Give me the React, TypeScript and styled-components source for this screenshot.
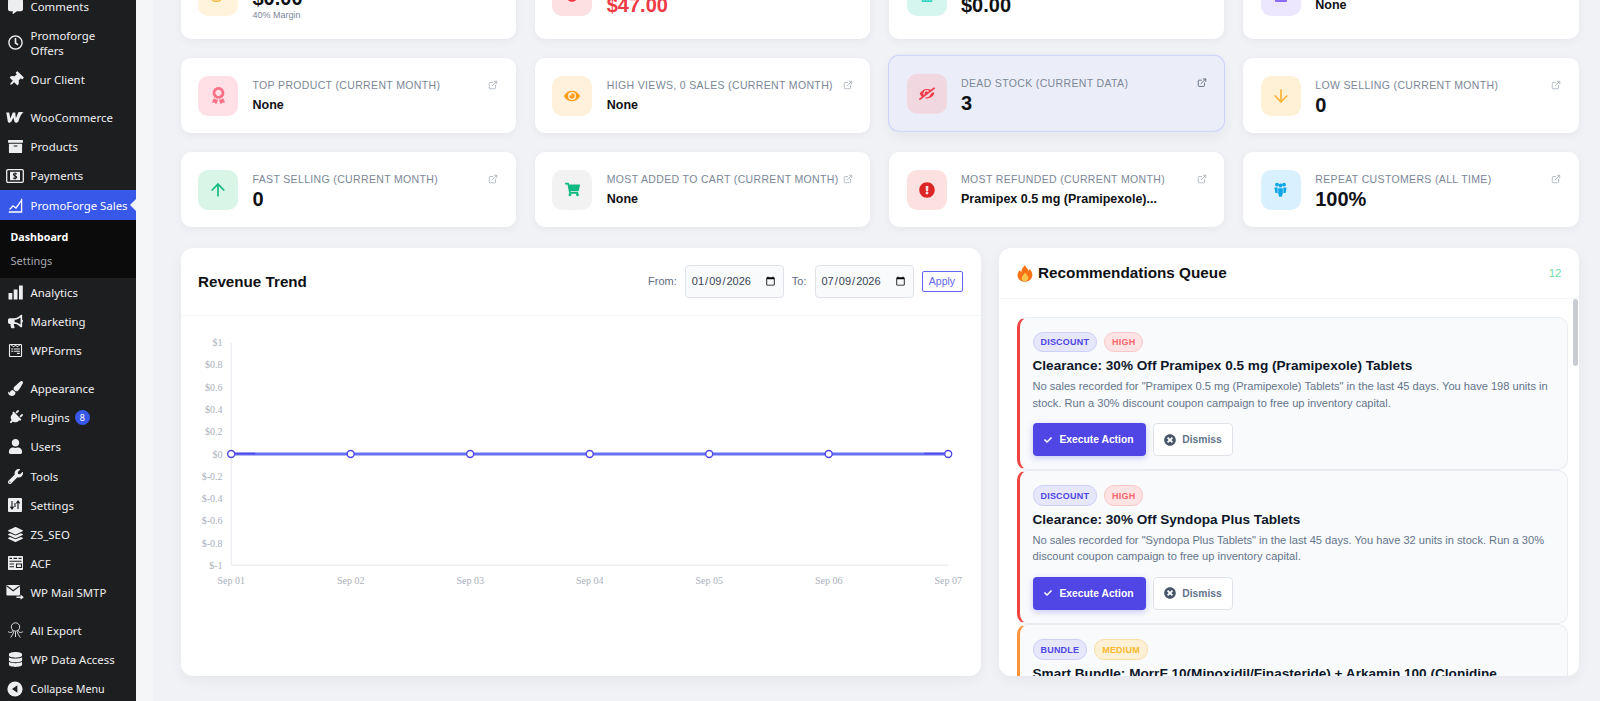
import React from "react";
import styled, { createGlobalStyle } from "styled-components";
import {
  FaArchive, FaAward, FaBox, FaBullhorn, FaCalculator, FaCheck, FaCoins,
  FaCommentAlt, FaDatabase, FaEye, FaEyeSlash, FaExclamationCircle, FaLayerGroup, FaMinusCircle,
  FaPaintBrush, FaPlug, FaRegClock, FaShoppingCart, FaThumbtack, FaTimesCircle, FaUser,
  FaWrench, FaWpforms,
} from "react-icons/fa";
import { FiExternalLink } from "react-icons/fi";
import { ArrowDown, ArrowUp } from "lucide-react";

const GlobalStyle = createGlobalStyle`
  html, body { margin: 0; padding: 0; height: 100%; overflow: hidden; background: #f0f2f6; }
  body { font-family: "Liberation Sans", Arial, sans-serif; }
  * { box-sizing: border-box; }
`;

const Page = styled.div`
  display: flex;
  height: 701px;
  overflow: hidden;
`;

/* ---------- admin sidebar ---------- */

const Sidebar = styled.nav`
  width: 136px;
  flex-shrink: 0;
  background: #1d1e20;
  color: #f0f0f1;
  font-family: "Noto Sans", sans-serif;
  font-size: 11.4px;
  margin-top: -8.5px;
  height: 720px;
`;

const MenuItem = styled.div<{ $active?: boolean; $tall?: boolean; $gap?: boolean; $small?: boolean }>`
  position: relative;
  display: flex;
  align-items: center;
  height: ${p => (p.$tall ? "44px" : p.$active ? "30px" : p.$small ? "30px" : "29.05px")};
  margin-top: ${p => (p.$gap ? "9.5px" : "0")};
  padding-left: 30.5px;
  line-height: 15px;
  white-space: nowrap;
  font-size: ${p => (p.$small ? "10.7px" : "11.4px")};
  background: ${p => (p.$active ? "#3858e9" : "transparent")};
  color: ${p => (p.$active ? "#fff" : "#f0f0f1")};
`;

const MenuIcon = styled.span`
  position: absolute;
  left: 5px;
  top: 50%;
  transform: translateY(-50%);
  width: 20px;
  height: 20px;
  display: flex;
  align-items: center;
  justify-content: center;
  color: #eceeef;
  font-size: 15px;
`;

const ActiveArrow = styled.span`
  position: absolute;
  right: 0;
  top: 50%;
  margin-top: -6px;
  border: 6px solid transparent;
  border-right-color: #f0f2f6;
  border-left-width: 0;
`;

const Submenu = styled.div`
  background: #0b0b0c;
  padding: 4.5px 0;
  height: 57.5px;
`;

const SubItem = styled.div<{ $current?: boolean }>`
  height: 24.3px;
  line-height: 24px;
  padding-left: 10.5px;
  font-size: ${p => (p.$current ? "10.7px" : "11px")};
  font-weight: ${p => (p.$current ? 700 : 400)};
  color: ${p => (p.$current ? "#fff" : "#a5a8ac")};
`;

const Badge = styled.span`
  display: inline-flex;
  align-items: center;
  justify-content: center;
  width: 15px;
  height: 15px;
  margin-left: 5px;
  border-radius: 50%;
  background: #3858e9;
  color: #fff;
  font-size: 9px;
`;

const PaymentsIcon = () => (
  <svg width="18" height="14" viewBox="0 0 18 14">
    <rect x="0.7" y="0.7" width="16.6" height="12.6" rx="1.2" fill="none" stroke="currentColor" strokeWidth="1.3" />
    <rect x="4" y="2.8" width="10" height="8.4" fill="currentColor" />
    <path d="M11 5 C10 4.2 7.4 4.3 7.4 5.6 C7.4 7.2 10.8 6.6 10.8 8.3 C10.8 9.6 8 9.6 7 8.9 M9 3.6 V10.4" fill="none" stroke="#1d1e20" strokeWidth="1.1" />
  </svg>
);

const WooIcon = () => (
  <svg width="18" height="11" viewBox="0 0 18 11">
    <path d="M0.3 0.5 H3.2 L4.3 6.4 L6.8 0.5 H9.2 L9.9 6.2 L12.2 0.5 C13.4 -0.1 16.8 -0.1 17.6 0.8 C15.6 1.2 14.2 4 12.4 9.6 C11.6 11 9.2 11 8.4 9.4 L7.4 5.6 L5.4 9.6 C4.4 11 2.4 11 1.8 9.4 Z" fill="currentColor" />
  </svg>
);

const SalesIcon = () => (
  <svg width="15" height="15" viewBox="0 0 15 15" fill="none" stroke="currentColor" strokeWidth="1.3">
    <path d="M13.6 0.8 V14 H0.8" />
    <path d="M1.6 11.5 L5 7.8 L8 10 L13.2 2.8" />
  </svg>
);

const BarsIcon = () => (
  <svg width="15" height="15" viewBox="0 0 15 15" fill="currentColor">
    <rect x="0.5" y="8" width="3.8" height="6.5" />
    <rect x="5.7" y="4.5" width="3.8" height="10" />
    <rect x="11" y="0.5" width="3.8" height="14" />
  </svg>
);

const SlidersIcon = () => (
  <svg width="14" height="14" viewBox="0 0 14 14">
    <rect width="14" height="14" rx="1" fill="currentColor" />
    <path d="M4 3 V11 M2.4 8.6 L4 11 L5.6 8.6 M10 11 V3 M8.4 5.4 L10 3 L11.6 5.4 M7 5 V9" fill="none" stroke="#1d1e20" strokeWidth="1.1" />
  </svg>
);

const TableIcon = () => (
  <svg width="15" height="14" viewBox="0 0 15 14">
    <rect width="15" height="14" rx="0.8" fill="currentColor" />
    <path d="M1.5 2.4 H4 M5.5 2.4 H9 M10.5 2.4 H13.5 M1.5 5.2 H13.5 M1.5 8 H6 M8.5 8 H13.5 V11.5 H8.5 Z M1.5 10.8 H6" fill="none" stroke="#1d1e20" strokeWidth="1.1" />
  </svg>
);

const MailIcon = () => (
  <svg width="18" height="16" viewBox="0 0 18 16">
    <rect x="0.4" y="1" width="13.6" height="10.6" rx="1" fill="currentColor" />
    <path d="M1 2 L7.2 6.8 L13.6 2" fill="none" stroke="#1d1e20" strokeWidth="1.2" />
    <path d="M10.5 12.6 H14.6 V10.6 L17.8 13.2 L14.6 15.8 V14 H10.5 Z" fill="currentColor" />
  </svg>
);

const OctopusIcon = () => (
  <svg width="17" height="17" viewBox="0 0 17 17" fill="none" stroke="currentColor" strokeWidth="0.9">
    <circle cx="8.5" cy="5" r="4.2" />
    <path d="M5.6 8.4 C5.4 11 3.2 11 1 9.6 M6.6 9.4 C6.4 12 5 13.5 3.6 15.6 M10.4 9.4 C10.6 12 12 13.5 13.4 15.6 M11.4 8.4 C11.6 11 13.8 11 16 9.6 M8.5 9.6 V15" />
  </svg>
);

const CollapseIcon = () => (
  <svg width="16" height="16" viewBox="0 0 16 16">
    <circle cx="8" cy="8" r="7.6" fill="currentColor" />
    <path d="M10.4 4.2 V11.8 L5 8 Z" fill="#1d1e20" />
  </svg>
);

const PeopleIcon = () => (
  <svg width="13" height="15" viewBox="0 0 13 15" fill="currentColor">
    <circle cx="3" cy="2.6" r="1.9" />
    <circle cx="10" cy="2.6" r="1.9" />
    <circle cx="6.5" cy="3.6" r="2" />
    <path d="M0.4 5.4 H3.6 V11 H1.4 Z M9.4 5.4 H12.6 L11.6 11 H9.4 Z" />
    <path d="M4.2 6.2 H8.8 V11.6 L7.8 14.8 H5.2 L4.2 11.6 Z" />
  </svg>
);

const menuTop: [React.ReactNode, React.ReactNode, boolean?, boolean?][] = [
  [<FaCommentAlt />, "Comments"],
  [<FaRegClock />, <>Promoforge<br />Offers</>, true],
  [<FaThumbtack style={{ transform: "rotate(45deg)" }} />, "Our Client"],
  [<WooIcon />, "WooCommerce", false, true],
  [<FaArchive />, "Products"],
  [<PaymentsIcon />, "Payments"],
];

const menuMiddle: [React.ReactNode, string, boolean?][] = [
  [<BarsIcon />, "Analytics"],
  [<FaBullhorn />, "Marketing"],
  [<FaWpforms />, "WPForms"],
];

const menuBottom: [React.ReactNode, string][] = [
  [<FaUser />, "Users"],
  [<FaWrench />, "Tools"],
  [<SlidersIcon />, "Settings"],
  [<FaLayerGroup />, "ZS_SEO"],
  [<TableIcon />, "ACF"],
  [<MailIcon />, "WP Mail SMTP"],
];

function AdminMenu() {
  return (
    <Sidebar>
      {menuTop.map(([icon, label, tall, gap], i) => (
        <MenuItem key={i} $tall={tall} $gap={gap}>
          <MenuIcon>{icon}</MenuIcon>
          <span>{label}</span>
        </MenuItem>
      ))}
      <MenuItem $active>
        <MenuIcon style={{ color: "#fff" }}><SalesIcon /></MenuIcon>
        <span>PromoForge Sales</span>
        <ActiveArrow />
      </MenuItem>
      <Submenu>
        <SubItem $current>Dashboard</SubItem>
        <SubItem>Settings</SubItem>
      </Submenu>
      {menuMiddle.map(([icon, label]) => (
        <MenuItem key={label}>
          <MenuIcon>{icon}</MenuIcon>
          <span>{label}</span>
        </MenuItem>
      ))}
      <MenuItem $gap>
        <MenuIcon><FaPaintBrush /></MenuIcon>
        <span>Appearance</span>
      </MenuItem>
      <MenuItem>
        <MenuIcon><FaPlug style={{ transform: "rotate(45deg)" }} /></MenuIcon>
        <span>Plugins</span>
        <Badge>8</Badge>
      </MenuItem>
      {menuBottom.map(([icon, label]) => (
        <MenuItem key={label}>
          <MenuIcon>{icon}</MenuIcon>
          <span>{label}</span>
        </MenuItem>
      ))}
      <MenuItem $gap>
        <MenuIcon><OctopusIcon /></MenuIcon>
        <span>All Export</span>
      </MenuItem>
      <MenuItem>
        <MenuIcon><FaDatabase /></MenuIcon>
        <span>WP Data Access</span>
      </MenuItem>
      <MenuItem $small>
        <MenuIcon><CollapseIcon /></MenuIcon>
        <span>Collapse Menu</span>
      </MenuItem>
    </Sidebar>
  );
}

/* ---------- stat cards ---------- */

const Main = styled.main`
  flex: 1;
  min-width: 0;
  padding: 0 21.5px 0 44.5px;
  background: linear-gradient(90deg, #f5f6f8 0, #f5f6f8 17px, #f0f2f6 17px);
`;

const StatsGrid = styled.section`
  display: grid;
  grid-template-columns: repeat(4, 1fr);
  gap: 19px;
  margin-top: -47px;
`;

const Card = styled.div<{ $hover?: boolean }>`
  display: flex;
  align-items: center;
  gap: 14.5px;
  padding: 17.5px;
  border-radius: 10px;
  background: ${p => (p.$hover ? "#ebeef9" : "#fff")};
  box-shadow: ${p => (p.$hover ? "0 0 0 1px #ccd2fa, 0 6px 14px rgba(15, 23, 42, 0.05)" : "0 2px 8px rgba(15, 23, 42, 0.05)")};
  transform: ${p => (p.$hover ? "translateY(-2.3px)" : "none")};
`;

const IconBox = styled.div<{ $bg: string; $fg: string }>`
  width: 40px;
  height: 40px;
  flex-shrink: 0;
  border-radius: 10px;
  display: flex;
  align-items: center;
  justify-content: center;
  background: ${p => p.$bg};
  color: ${p => p.$fg};
  font-size: 15px;
`;

const CardBody = styled.div`
  flex: 1;
  min-width: 0;
  min-height: 40px;
  padding-top: 3px;
`;

const LabelRow = styled.div`
  display: flex;
  justify-content: space-between;
  align-items: center;
  height: 13px;
  margin-bottom: 1px;
`;

const Label = styled.span`
  font-size: 10.5px;
  letter-spacing: 0.35px;
  color: #7b8798;
  text-transform: uppercase;
  white-space: nowrap;
`;

const LinkOut = styled.span<{ $strong?: boolean }>`
  display: flex;
  font-size: 10px;
  color: ${p => (p.$strong ? "#566072" : "#aab2bf")};
`;

const Value = styled.div<{ $big?: boolean; $red?: boolean; $tight?: boolean }>`
  height: ${p => (p.$tight ? "20px" : "23px")};
  line-height: ${p => (p.$tight ? "20px" : "24px")};
  font-size: ${p => (p.$big ? "20px" : "12.5px")};
  font-weight: 700;
  color: ${p => (p.$red ? "#ef3a46" : "#0f1115")};
  white-space: nowrap;
`;

const SubValue = styled.div`
  font-size: 9px;
  line-height: 14px;
  color: #7b8798;
`;

type Stat = {
  icon: React.ReactNode;
  bg: string;
  fg: string;
  label?: string;
  value: string;
  big?: boolean;
  red?: boolean;
  sub?: string;
  hover?: boolean;
};

const stats: Stat[] = [
  { icon: <FaCoins size={12} />, bg: "#fff3dc", fg: "#f6b93b", value: "$0.00", big: true, sub: "40% Margin" },
  { icon: <FaMinusCircle size={12} />, bg: "#fde0e2", fg: "#ef3a46", value: "$47.00", big: true, red: true },
  { icon: <FaCalculator size={12} />, bg: "#d5f5ef", fg: "#2dd4bf", value: "$0.00", big: true },
  { icon: <FaBox size={12} />, bg: "#ece6ff", fg: "#8b6cf6", value: "None" },
  { icon: <FaAward size={17} />, bg: "#ffe0e6", fg: "#fb7185", label: "Top Product (Current Month)", value: "None" },
  { icon: <FaEye size={16} />, bg: "#fff1dc", fg: "#ff9f1c", label: "High Views, 0 Sales (Current Month)", value: "None" },
  { icon: <FaEyeSlash size={16} style={{ transform: "scaleX(-1)" }} />, bg: "#f1d8e0", fg: "#ef3a46", label: "Dead Stock (Current Data)", value: "3", big: true, hover: true },
  { icon: <ArrowDown size={20} strokeWidth={2} />, bg: "#fff1d6", fg: "#fbb437", label: "Low Selling (Current Month)", value: "0", big: true },
  { icon: <ArrowUp size={20} strokeWidth={2} />, bg: "#d9f5e8", fg: "#10b981", label: "Fast Selling (Current Month)", value: "0", big: true },
  { icon: <FaShoppingCart size={15} />, bg: "#f2f2f2", fg: "#10b981", label: "Most Added to Cart (Current Month)", value: "None" },
  { icon: <FaExclamationCircle size={16} />, bg: "#fde0e0", fg: "#dc2626", label: "Most Refunded (Current Month)", value: "Pramipex 0.5 mg (Pramipexole)..." },
  { icon: <PeopleIcon />, bg: "#d9f0ff", fg: "#0ea5e9", label: "Repeat Customers (All Time)", value: "100%", big: true },
];

/* ---------- revenue chart ---------- */

const Columns = styled.section`
  display: grid;
  grid-template-columns: 800px 580px;
  gap: 18px;
  margin-top: 21px;
`;

const Panel = styled.div`
  position: relative;
  height: 427.5px;
  border-radius: 12px;
  background: #fff;
  overflow: hidden;
  box-shadow: 0 4px 14px rgba(15, 23, 42, 0.05);
`;

const ChartHeader = styled.header`
  display: flex;
  align-items: center;
  justify-content: space-between;
  height: 67.5px;
  padding: 0 18px 0 17.5px;
  border-bottom: 1px solid #f6f7f9;
`;

const PanelTitle = styled.h3`
  margin: 0;
  font-size: 15.2px;
  font-weight: 700;
  color: #0f1115;
`;

const DateForm = styled.form`
  display: flex;
  align-items: center;
`;

const DateLabel = styled.label`
  font-size: 11px;
  color: #5f6b7c;
  margin-right: 8px;
`;

const DateInput = styled.input`
  width: 99px;
  height: 33px;
  padding: 0 5px;
  margin-right: 8px;
  border: 1px solid #dfe3e9;
  border-radius: 4px;
  background: #f8fafc;
  color: #3a4452;
  font: 11px "Liberation Sans", Arial, sans-serif;
`;

const ApplyButton = styled.button`
  width: 41px;
  height: 21px;
  padding: 0;
  border: 1px solid #6366f1;
  border-radius: 2px;
  background: #fff;
  color: #6366f1;
  font: 10.5px "Liberation Sans", Arial, sans-serif;
`;

const ChartSvg = styled.svg`
  display: block;
  font-family: "Liberation Serif", serif;
  font-size: 10px;
`;

const ticks = ["$1", "$0.8", "$0.6", "$0.4", "$0.2", "$0", "$-0.2", "$-0.4", "$-0.6", "$-0.8", "$-1"];
const days = ["Sep 01", "Sep 02", "Sep 03", "Sep 04", "Sep 05", "Sep 06", "Sep 07"];

function RevenueChart() {
  const left = 50.2;
  const step = 119.5;
  const top = 26.7;
  const rowH = 22.26;
  const zero = top + rowH * 5;
  const bottom = top + rowH * 10;
  return (
    <ChartSvg width="800" height="359" viewBox="0 0 800 359">
      <line x1={left} y1={top} x2={left} y2={bottom} stroke="#e7e9ee" />
      <line x1={left} y1={bottom} x2={left + step * 6} y2={bottom} stroke="#eceef1" strokeWidth="1.5" />
      {ticks.map((t, i) => (
        <text key={t} x={41.5} y={top + rowH * i + 3.5} textAnchor="end" fill="#aab0bd">{t}</text>
      ))}
      {days.map((d, i) => (
        <text key={d} x={left + step * i} y={bottom + 18.5} textAnchor="middle" fill="#aab0bd">{d}</text>
      ))}
      <line x1={left} y1={zero} x2={left + step * 6} y2={zero} stroke="#6670f3" strokeWidth="3" />
      <line x1={left} y1={zero - 0.5} x2={left + 24} y2={zero - 0.5} stroke="#4f46e5" strokeWidth="1.5" />
      <line x1={left + step * 6 - 24} y1={zero - 0.5} x2={left + step * 6} y2={zero - 0.5} stroke="#4f46e5" strokeWidth="1.5" />
      {days.map((d, i) => (
        <circle key={d} cx={left + step * i} cy={zero} r="3.5" fill="#fff" stroke="#4f46e5" strokeWidth="1.4" />
      ))}
    </ChartSvg>
  );
}

/* ---------- recommendations ---------- */

const QueueHeader = styled.header`
  display: flex;
  align-items: center;
  justify-content: space-between;
  height: 50.5px;
  padding: 1px 17px 0 18.5px;
  border-bottom: 1px solid #f3f4f6;
`;

const QueueTitle = styled(PanelTitle)`
  display: flex;
  align-items: center;
  gap: 5px;
  font-size: 15.3px;
`;

const Count = styled.span`
  font-size: 11.5px;
  color: #6fdca6;
`;

const QueueList = styled.div`
  height: 377px;
  overflow: hidden;
  padding: 18px 11px 0 18px;
`;

const ScrollThumb = styled.div`
  position: absolute;
  top: 51px;
  right: 0.5px;
  width: 5px;
  height: 67px;
  border-radius: 3px;
  background: #c9cdd3;
`;

const RecCard = styled.article<{ $accent: string }>`
  margin-bottom: 0.5px;
  padding: 14px 13px 12.5px;
  border: 1px solid #e9ecf1;
  border-left: 3px solid ${p => p.$accent};
  border-radius: 10px;
  background: #f8fafc;
`;

const TagRow = styled.div`
  display: flex;
  gap: 7px;
`;

const Tag = styled.span<{ $tone: "type" | "high" | "medium" }>`
  display: inline-flex;
  align-items: center;
  height: 20.7px;
  padding: 0 7px;
  border-radius: 10px;
  font-size: 9px;
  font-weight: 700;
  letter-spacing: 0.2px;
  background: ${p => ({ type: "#e6e7fb", high: "#fde3e3", medium: "#fdf0d5" }[p.$tone])};
  border: 1px solid ${p => ({ type: "#cdd0f8", high: "#f9c9c9", medium: "#f8dfa8" }[p.$tone])};
  color: ${p => ({ type: "#4f46e5", high: "#f8686f", medium: "#fbb92c" }[p.$tone])};
`;

const RecTitle = styled.h4`
  margin: 5px 0 3px;
  font-size: 13.6px;
  line-height: 18px;
  font-weight: 700;
  color: #0f172a;
`;

const RecText = styled.p`
  margin: 0 0 11.7px;
  font-size: 11.1px;
  line-height: 16.4px;
  color: #64748b;
`;

const ActionRow = styled.div`
  display: flex;
  gap: 7.5px;
`;

const ExecuteButton = styled.button`
  display: inline-flex;
  align-items: center;
  justify-content: center;
  gap: 7px;
  width: 113px;
  height: 33.7px;
  padding: 0;
  border: 0;
  border-radius: 4px;
  background: #4f46e5;
  color: #fff;
  font: 700 10.3px "Liberation Sans", Arial, sans-serif;
  box-shadow: 0 2px 6px rgba(79, 70, 229, 0.28);
  svg { font-size: 8px; }
`;

const DismissButton = styled.button`
  display: inline-flex;
  align-items: center;
  justify-content: center;
  gap: 6px;
  width: 80px;
  height: 33.7px;
  padding: 0;
  border: 1px solid #dfe3e9;
  border-radius: 4px;
  background: #fff;
  color: #64748b;
  font: 700 10.3px "Liberation Sans", Arial, sans-serif;
  svg { font-size: 12px; color: #475569; }
`;

const FlameIcon = () => (
  <svg width="16" height="17" viewBox="0 0 17 18">
    <path d="M8.6 0.3 C9.4 3 12 4 12.6 6.4 C13.2 5.8 13.4 5 13.3 4.2 C15.4 6 16.6 8.4 16.3 11 C15.9 15 12.6 17.7 8.4 17.7 C4 17.7 0.8 15 0.6 11 C0.5 8.6 1.8 6.6 3.2 5.2 C3.4 6.2 3.8 7 4.6 7.4 C4.6 4.6 6.4 2 8.6 0.3 Z" fill="#f97316" />
    <path d="M8.6 8 C9.4 10 12 11 12 13.6 C12 15.9 10.4 17.4 8.4 17.4 C6.4 17.4 4.8 16 4.9 13.8 C5 11.6 7.6 10.4 8.6 8 Z" fill="#fcc44d" />
  </svg>
);

const recs = [
  {
    accent: "#ef4444",
    type: "Discount",
    level: "High",
    title: "Clearance: 30% Off Pramipex 0.5 mg (Pramipexole) Tablets",
    text: 'No sales recorded for "Pramipex 0.5 mg (Pramipexole) Tablets" in the last 45 days. You have 198 units in stock. Run a 30% discount coupon campaign to free up inventory capital.',
  },
  {
    accent: "#ef4444",
    type: "Discount",
    level: "High",
    title: "Clearance: 30% Off Syndopa Plus Tablets",
    text: 'No sales recorded for "Syndopa Plus Tablets" in the last 45 days. You have 32 units in stock. Run a 30% discount coupon campaign to free up inventory capital.',
  },
  {
    accent: "#fb923c",
    type: "Bundle",
    level: "Medium",
    title: "Smart Bundle: MorrF 10(Minoxidil/Finasteride) + Arkamin 100 (Clonidine",
    text: "",
  },
];

export default function App() {
  return (
    <Page>
      <GlobalStyle />
      <AdminMenu />
      <Main>
        <StatsGrid>
          {stats.map((s, i) => (
            <Card key={i} $hover={s.hover}>
              <IconBox $bg={s.bg} $fg={s.fg}>{s.icon}</IconBox>
              <CardBody>
                <LabelRow>
                  {s.label && <Label>{s.label}</Label>}
                  {s.label && <LinkOut $strong={s.hover}><FiExternalLink /></LinkOut>}
                </LabelRow>
                <Value $big={s.big} $red={s.red} $tight={!!s.sub}>{s.value}</Value>
                {s.sub && <SubValue>{s.sub}</SubValue>}
              </CardBody>
            </Card>
          ))}
        </StatsGrid>
        <Columns>
          <Panel>
            <ChartHeader>
              <PanelTitle>Revenue Trend</PanelTitle>
              <DateForm>
                <DateLabel>From:</DateLabel>
                <DateInput type="date" defaultValue="2026-01-09" />
                <DateLabel>To:</DateLabel>
                <DateInput type="date" defaultValue="2026-07-09" />
                <ApplyButton type="button">Apply</ApplyButton>
              </DateForm>
            </ChartHeader>
            <RevenueChart />
          </Panel>
          <Panel>
            <QueueHeader>
              <QueueTitle><FlameIcon /> Recommendations Queue</QueueTitle>
              <Count>12</Count>
            </QueueHeader>
            <QueueList>
              {recs.map(r => (
                <RecCard key={r.title} $accent={r.accent}>
                  <TagRow>
                    <Tag $tone="type">{r.type.toUpperCase()}</Tag>
                    <Tag $tone={r.level === "High" ? "high" : "medium"}>{r.level.toUpperCase()}</Tag>
                  </TagRow>
                  <RecTitle>{r.title}</RecTitle>
                  {r.text && <RecText>{r.text}</RecText>}
                  {r.text && (
                    <ActionRow>
                      <ExecuteButton type="button"><FaCheck /> Execute Action</ExecuteButton>
                      <DismissButton type="button"><FaTimesCircle /> Dismiss</DismissButton>
                    </ActionRow>
                  )}
                </RecCard>
              ))}
            </QueueList>
            <ScrollThumb />
          </Panel>
        </Columns>
      </Main>
    </Page>
  );
}
